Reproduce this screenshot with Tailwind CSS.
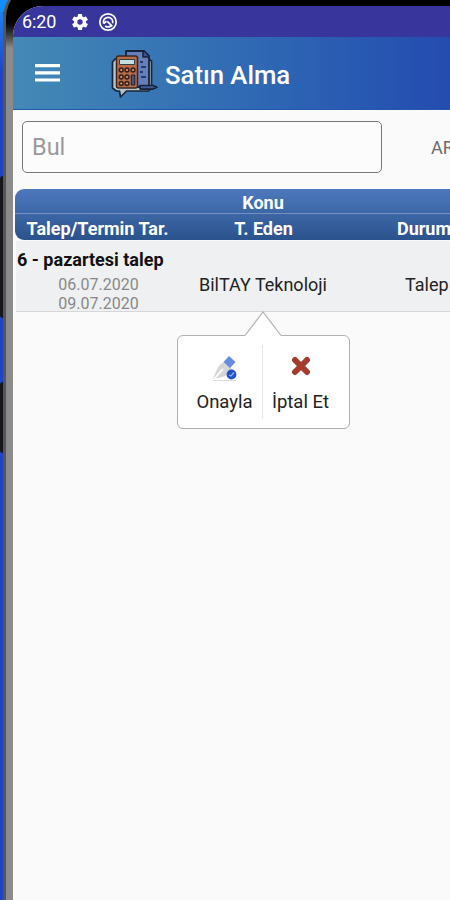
<!DOCTYPE html>
<html lang="tr">
<head>
  <meta charset="UTF-8">
  <title>Satın Alma</title>
  <script src="https://cdn.jsdelivr.net/npm/@tailwindcss/browser@4"></script>
</head>
<body class="w-[450px] h-[900px] overflow-hidden bg-[#2145c0] font-['Roboto',sans-serif]">
  <div class="relative flex w-[450px] h-[900px] overflow-hidden">
    <!-- side buttons of the phone -->
    <div class="w-[3px] shrink-0 bg-linear-to-b from-[#1b8bff] from-0% to-[#2145c0] to-8%">
      <div class="mt-[176px] h-[142px] rounded-l-sm bg-[#15171c]"></div>
      <div class="mt-[64px] h-[71px] rounded-l-sm bg-[#15171c]"></div>
    </div>
    <div class="absolute top-0 left-0 w-3 h-3 bg-[#128dff]"></div>

    <!-- phone frame -->
    <div class="relative flex-1 -mt-[16px] h-[916px] rounded-tl-[34px] overflow-hidden bg-[#55555a] pl-[3px]">
      <div class="h-full rounded-tl-[34px] pt-[22px] pl-[7px] bg-linear-to-b from-black from-[34px] to-[#8b8b8b] to-[64px]">
        <div class="flex flex-col h-full w-[440px] rounded-tl-[30px] overflow-hidden bg-[#fafafa]">

          <!-- status bar -->
          <div class="flex items-center h-[31px] shrink-0 pl-[9px] bg-[#38369c] text-white">
            <span class="w-[48px] text-[18px] leading-none tracking-[-0.1px]">6:20</span>
            <svg class="w-[20px] h-[20px]" viewBox="0 0 24 24" fill="currentColor"><path d="M19.14 12.94a7.07 7.07 0 0 0 0-1.88l2.03-1.58a.49.49 0 0 0 .12-.61l-1.92-3.32a.49.49 0 0 0-.59-.22l-2.39.96a7 7 0 0 0-1.62-.94l-.36-2.54a.48.48 0 0 0-.48-.41h-3.84a.47.47 0 0 0-.47.41l-.36 2.54a7.2 7.2 0 0 0-1.62.94l-2.39-.96a.47.47 0 0 0-.59.22L2.74 8.87a.47.47 0 0 0 .12.61l2.03 1.58a7.4 7.4 0 0 0 0 1.88l-2.03 1.58a.49.49 0 0 0-.12.61l1.92 3.32c.12.22.37.29.59.22l2.39-.96c.5.38 1.03.7 1.62.94l.36 2.54c.05.24.24.41.48.41h3.84c.24 0 .44-.17.47-.41l.36-2.54a7 7 0 0 0 1.62-.94l2.39.96c.22.08.47 0 .59-.22l1.92-3.32a.47.47 0 0 0-.12-.61zM12 15.2a3.2 3.2 0 1 1 0-6.4 3.2 3.2 0 0 1 0 6.4z"/></svg>
            <svg class="ml-[8px] w-[20px] h-[20px]" viewBox="0 0 20 20" fill="none" stroke="currentColor"><circle cx="10" cy="10" r="8.2" stroke-width="1.7"/><path d="M5.600 11.500A4.700 4.700 0 1 1 14.600 11.200M5.600 11.500 8.500 9.300M7.200 14a4.800 4.800 0 0 0 5.600 0M9.300 9.300l5 5" stroke-width="1.7"/></svg>
            <svg class="ml-auto w-[2px] h-[6px]" viewBox="0 0 2 6"><path d="M0 1h2v4z" fill="white"/></svg>
          </div>

          <!-- toolbar -->
          <div class="flex items-center h-[73px] shrink-0 pl-[22px] bg-linear-to-r from-[#4489b6] to-[#244bb0] border-b border-[#2158ad]">
            <svg class="w-[25px] h-[18px]" viewBox="0 0 25 18" fill="white"><path d="M0 0h25v3.2H0zM0 7.2h25v3.2H0zM0 14.4h25v3.2H0z"/></svg>
            <svg class="ml-[50px] mt-[1px] w-[50px] h-[50px]" viewBox="0 0 50 50" stroke-linejoin="round">
              <path d="M5 10 2.500 13v26l4 3h3l1 6 6-6h22l3-3V12l-3-2z" fill="#b3c5c5" stroke="#1b2535" stroke-width="1.700"/>
              <path d="M16 6V2h18l5 5v31H16z" fill="#6480bb" stroke="#17213a" stroke-width="1.800"/>
              <path d="M33 2v6h6" fill="#3b5590" stroke="#17213a" stroke-width="1.500"/>
              <path d="M30 13h3M31 18h5M30 23h3M31 28h5" stroke="#273b70" stroke-width="1.800"/>
              <rect x="6.500" y="7" width="21" height="32" rx="2" fill="#b96c48" stroke="#3a2725" stroke-width="1.500"/>
              <rect x="9.500" y="10.500" width="15" height="5" fill="#c4dfe0" stroke="#344045"/>
              <g fill="#dca06d" stroke="#3a2321" stroke-width="1.600">
                <circle cx="11.200" cy="21" r="1.900"/><circle cx="17" cy="21" r="1.900"/><circle cx="23" cy="21" r="1.900"/>
                <circle cx="11.200" cy="28" r="1.900"/><circle cx="17" cy="28" r="1.900"/>
                <circle cx="11.200" cy="34.500" r="1.900"/><circle cx="17" cy="34.500" r="1.900"/>
              </g>
              <rect x="21.300" y="26" width="3.500" height="10" fill="#465577" stroke="#251f2a"/>
              <path d="M30 36.500h13l4 1.800-4 1.800H30z" fill="#3f5c96" stroke="#17213a" stroke-width="1.600"/>
            </svg>
            <h1 class="ml-[5px] mt-[5px] text-[25.700px] leading-none font-medium text-white">Satın Alma</h1>
          </div>

          <!-- search -->
          <div class="flex items-center h-[79px] shrink-0 pl-[9px] pb-[5px]">
            <div class="flex items-center w-[360px] h-[52px] shrink-0 rounded-[5px] border-[1.500px] border-[#777] bg-[#fcfcfc] pt-[2px] pl-[9px] text-[23.500px] text-[#9a9a9a]">Bul</div>
            <span class="ml-[49px] shrink-0 text-[18px] text-[#6b6b6b]">ARA</span>
          </div>

          <!-- list header -->
          <div class="ml-[2px] h-[51px] w-[500px] shrink-0 rounded-[9px] overflow-hidden bg-linear-to-b from-[#4d79bd] to-[#2a528c] text-[18px] font-bold text-white">
            <div class="h-[25px] w-[496px] pt-[1px] text-center leading-[25px] border-b border-[#7590bf]">Konu</div>
            <div class="flex h-[26px] leading-[29px]">
              <span class="w-[165px] text-center">Talep/Termin Tar.</span>
              <span class="w-[167px] text-center">T. Eden</span>
              <span class="pl-[50px]">Durumu</span>
            </div>
          </div>

          <!-- row -->
          <div class="mt-[1px] ml-[3px] h-[71px] w-[500px] shrink-0 bg-[#eff0f2] border-b border-[#d6d6d6]">
            <div class="h-[35px] pt-[6px] pl-[1px] text-[18px] leading-[25px] font-bold text-[#111]">6 - pazartesi talep</div>
            <div class="flex text-[18px] leading-[18px] text-[#222]">
              <div class="w-[165px] text-center text-[16px] leading-[18.500px] text-[#888]">06.07.2020<br>09.07.2020</div>
              <div class="w-[164px] text-center">BilTAY Teknoloji</div>
              <div class="pl-[60px]">Talep</div>
            </div>
          </div>

          <!-- action popup -->
          <div class="relative ml-[164px] mt-[23px] flex h-[94px] w-[173px] shrink-0 rounded-[6px] border-[1.500px] border-[#b0b0b0] bg-white text-[18.500px] text-[#222]">
            <svg class="absolute -top-[25px] left-[66px] w-[38px] h-[27px]" viewBox="0 0 38 27"><path d="M1 24.500 19 1l18 23.500V27H1z" fill="white"/><path d="M1 24.500 19 1l18 23.500" fill="none" stroke="#b0b0b0" stroke-width="1.200"/></svg>
            <div class="flex flex-col items-center w-[84px] pt-[19px] pl-[9px]">
              <svg class="w-[25px] h-[26px]" viewBox="0 0 25 26">
                <path d="M1 24C4 16 6 10 12 7l8 7c-1 6-8 8-19 10z" fill="#d5d6d6"/>
                <path d="m2 24 9-10" stroke="#fff" stroke-width="1.800"/>
                <path d="m17 1 6.500 6-5.500 6-6.500-6z" fill="#668de3"/>
                <circle cx="19.500" cy="19.500" r="4.900" fill="#2352ca"/>
                <path d="m17 20 2 1 3-3.500" fill="none" stroke="#8fb0f5" stroke-width="1.300"/>
                <path d="M1 25.500h23" stroke="#ddd"/>
              </svg>
              <span class="mt-[9px] leading-[24px]">Onayla</span>
            </div>
            <div class="mt-[9px] h-[74px] w-px bg-[#e7e7e7]"></div>
            <div class="flex flex-col items-center w-[75px] pt-[20px]">
              <svg class="w-[20px] h-[20px]" viewBox="0 0 20 20"><path d="m4 4 12 12M16 4 4 16" stroke="#a43b2c" stroke-width="6" stroke-linecap="round"/></svg>
              <span class="mt-[14px] leading-[24px] whitespace-nowrap">İptal Et</span>
            </div>
          </div>
        </div>
      </div>
    </div>
  </div>
</body>
</html>
